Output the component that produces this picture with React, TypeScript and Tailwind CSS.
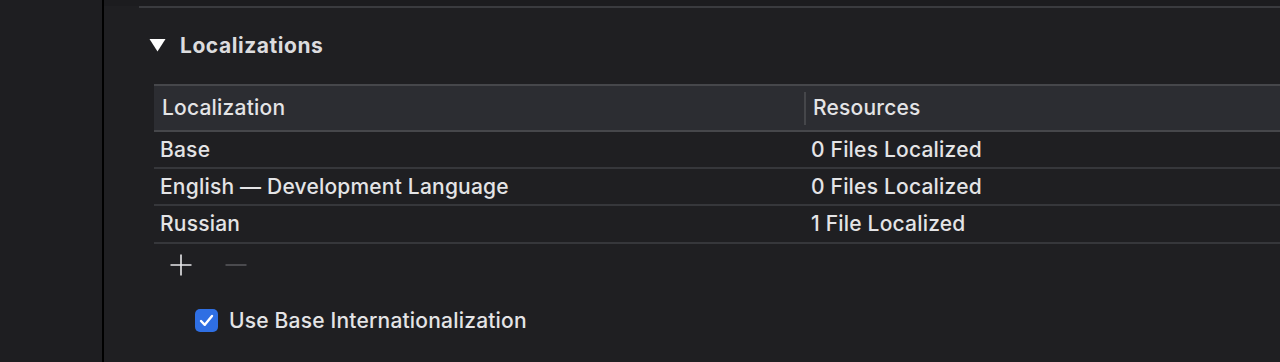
import React from 'react';

const ROWS = [
  { name: 'Base', res: '0 Files Localized', h: 'h-[37px]' },
  { name: 'English — Development Language', res: '0 Files Localized', h: 'h-[37px]' },
  { name: 'Russian', res: '1 File Localized', h: 'h-[38px]' },
];

export default function App() {
  return (
    <div
      className="flex h-[362px] w-[1280px] overflow-hidden bg-[#1f1f22] text-[#e4e4e6]"
      style={{ fontFamily: 'Inter, "Noto Sans", sans-serif' }}
    >
      {/* Sidebar */}
      <div className="w-[102px] shrink-0 bg-[#1e1e21]" />
      <div className="w-[2px] shrink-0 bg-black" />

      {/* Main */}
      <div className="flex min-w-0 flex-1 flex-col">
        <div className="h-[6px] bg-[#1c1c1f]" />
        <div className="ml-[35px] h-[2px] bg-[#3a3b3f]" />

        {/* Section title */}
        <div className="mt-[27px] flex h-[20px] items-center pl-[45px]">
          <svg width="17" height="14" viewBox="0 0 17 14" className="shrink-0">
            <polygon points="0.5,1 16.5,1 8.5,13.5" fill="#ffffff" />
          </svg>
          <span className="ml-[14px] text-[21px] font-bold leading-none tracking-[0.55px] text-[#dcdcde]">
            Localizations
          </span>
        </div>

        {/* Table */}
        <div className="ml-[50px] mt-[29px] text-[21px] font-medium tracking-[0.2px]">
          <div className="flex h-[48px] items-center border-y-2 border-[#46474b] bg-[#2c2d32]">
            <div className="w-[650px] pl-[8px]">Localization</div>
            <div className="h-[33px] w-[2px] bg-[#45464a]" />
            <div className="pl-[7px]">Resources</div>
          </div>
          {ROWS.map((r) => (
            <div key={r.name} className={`flex ${r.h} items-center border-b-2 border-[#36373b]`}>
              <div className="w-[652px] pl-[6px]">{r.name}</div>
              <div className="pl-[5px]">{r.res}</div>
            </div>
          ))}

          {/* Add / remove */}
          <div className="mt-[8px] flex h-[26px] items-center gap-[33px] pl-[16px]">
            <svg width="22" height="22" viewBox="0 0 22 22">
              <path d="M11 0.5V21.5M0.5 11H21.5" stroke="#e8e8ea" strokeWidth="1.6" />
            </svg>
            <svg width="22" height="22" viewBox="0 0 22 22">
              <path d="M0.5 11H21.5" stroke="#55565a" strokeWidth="1.6" />
            </svg>
          </div>

          {/* Checkbox */}
          <div className="mt-[31px] flex items-center pl-[41px]">
            <div className="flex h-[23px] w-[23px] items-center justify-center rounded-[5px] bg-[#2f6fe3]">
              <svg width="15" height="13" viewBox="0 0 15 13">
                <path
                  d="M2 7L5.8 10.8L13 2"
                  fill="none"
                  stroke="#ffffff"
                  strokeWidth="2.4"
                  strokeLinecap="round"
                  strokeLinejoin="round"
                />
              </svg>
            </div>
            <span className="ml-[11px] leading-none">Use Base Internationalization</span>
          </div>
        </div>
      </div>
    </div>
  );
}
